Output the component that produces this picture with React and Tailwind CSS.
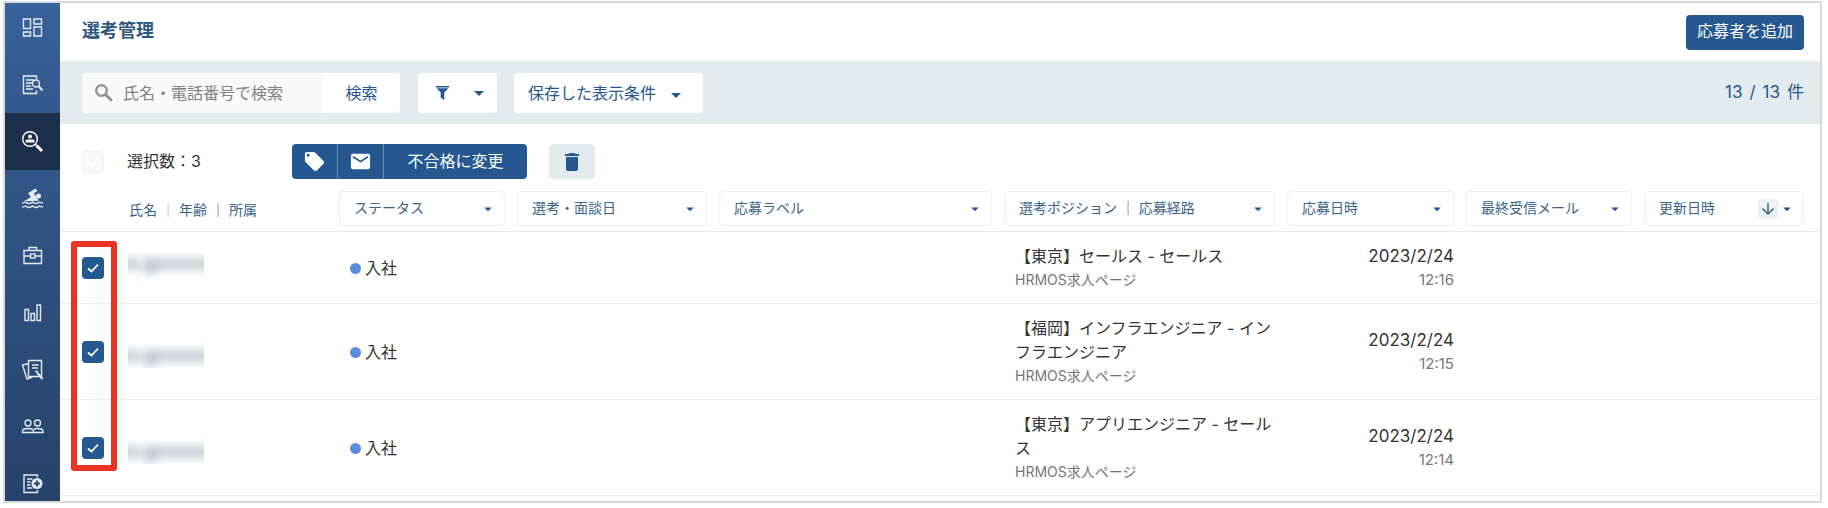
import { MdArrowDownward, MdArrowDropDown, MdDelete, MdEmail, MdLocalOffer } from 'react-icons/md';

const navItems = [
  {
    label: 'ダッシュボード',
    icon: (
      <path d="M1.500 2h7v9.500h-7zM12 2h7.500v5H12zM1.500 15h7v4h-7zM12 10h7.500v9H12z" />
    ),
  },
  {
    label: '求人',
    icon: (
      <>
        <path d="M14.500 5V2H1.500v17.500h13v-3M4 6h8M4 9h6M4 12h5M4 15h7" />
        <circle cx="14" cy="9.500" r="3.500" />
        <path d="M16.500 12l4 4.500" strokeWidth="2" />
      </>
    ),
  },
  {
    label: '選考管理',
    icon: (
      <>
        <circle cx="8" cy="8" r="7.300" />
        <circle cx="8" cy="5.500" r="2" fill="currentColor" stroke="none" />
        <path d="M3.500 11.500V10q0-1.500 2-1.500h5q2 0 2 1.500v1.500z" fill="currentColor" stroke="none" />
        <path d="M13 13l1.500 1.500" />
        <path d="M14.500 14.500l5.500 5.500" strokeWidth="3" />
      </>
    ),
  },
  {
    label: '入社管理',
    icon: (
      <>
        <path d="M4.500 12.500L10 9 7 5.500l6-4 1.500 1-3.500 3 4.500 6.500z" fill="currentColor" />
        <circle cx="16.500" cy="8" r="2.500" fill="currentColor" stroke="none" />
        <path d="M0 15q2 0 3.500-1 1.700 1.500 3.500 1.500t3.500-1.500q1.700 1.500 3.500 1.500t3.500-1.500q1.500 1 3.500 1M0 19q2 0 3.500-1 1.700 1.500 3.500 1.500t3.500-1.500q1.700 1.500 3.500 1.500t3.500-1.500q1.500 1 3.500 1" />
      </>
    ),
  },
  {
    label: 'タレントプール',
    icon: (
      <>
        <path d="M2 5.500h17.500v13H2zM7 5.500V2.500h7.500v3M2 11h6.500M13 11h6.500" />
        <rect x="8.500" y="9" width="4.500" height="4" />
      </>
    ),
  },
  {
    label: 'レポート',
    icon: <path d="M3 7.500h3.500v11H3zM9 11.500h3.500v7H9zM15 3h3.500v15.500H15z" />,
  },
  {
    label: '書類',
    icon: (
      <>
        <path d="M6.500 1.500h13v16h-13zM6.500 4.500l-6 1.500 4.500 14 5.500-2M10 6h6.500M10 9h6M13 12.500h3" />
        <path d="M15 13.500l5.500 6.500" strokeWidth="2" />
      </>
    ),
  },
  {
    label: 'メンバー',
    icon: (
      <>
        <circle cx="6" cy="7" r="3" />
        <circle cx="15.500" cy="7" r="3" />
        <path d="M.500 16.500v-1.500q0-2.500 5.500-2.500t5.500 2.500v1.500zM12 13q1.500-.500 3.500-.500 5.500 0 5.500 2.500v1.500h-9.500" />
      </>
    ),
  },
  {
    label: '書類追加',
    icon: (
      <>
        <path d="M15.500 4.500V2H2v17.500h13.500V17M5 6h5.500M5 9h3.500M5 12h3.500M5 15h5.500" />
        <circle cx="15" cy="10.500" r="5.500" fill="currentColor" stroke="none" />
        <path d="M15 7.500v6M12 10.500h6" stroke="#29466e" strokeWidth="2" />
      </>
    ),
  },
];

const applicants = [
  { id: 1, status: '入社', position: '【東京】セールス - セールス', route: 'HRMOS求人ページ', date: '2023/2/24', time: '12:16' },
  { id: 2, status: '入社', position: '【福岡】インフラエンジニア - インフラエンジニア', route: 'HRMOS求人ページ', date: '2023/2/24', time: '12:15' },
  { id: 3, status: '入社', position: '【東京】アプリエンジニア - セールス', route: 'HRMOS求人ページ', date: '2023/2/24', time: '12:14' },
];

function Checkbox({ label, disabled = false }) {
  return (
    <span className="grid w-[22px] h-[22px] place-items-center">
      <input
        type="checkbox"
        defaultChecked
        disabled={disabled}
        aria-label={label}
        className="col-start-1 row-start-1 w-[22px] h-[22px] appearance-none rounded bg-[#255890] disabled:bg-[#f8f8f8] disabled:border disabled:border-[#f0f0f0]"
      />
      <svg viewBox="0 0 22 22" className="col-start-1 row-start-1 w-[22px] h-[22px] pointer-events-none" fill="none" stroke="#fff" strokeWidth="1.800">
        <path d="M6 11.500l3.500 3L16 7.500" />
      </svg>
    </span>
  );
}

function HeaderFilter({ children, sorted = false }) {
  return (
    <button type="button" className="flex w-full h-[35px] items-center rounded border border-[#eaf0f2] pl-3.5 pr-[7px] text-left">
      <span className="flex-1 whitespace-nowrap pb-0.5">{children}</span>
      {sorted && (
        <span className="grid w-5 h-5 place-items-center rounded bg-[#eef1f4]">
          <MdArrowDownward className="w-[18px] h-[18px]" />
        </span>
      )}
      <MdArrowDropDown className="w-[18px] h-[18px] text-[#255890]" />
    </button>
  );
}

function Sidebar() {
  return (
    <nav className="w-[55px] shrink-0 overflow-hidden bg-linear-to-b from-[#376199] to-[#27426a] text-[#e4ebf4]">
      <ul className="-mt-1">
        {navItems.map((item, index) => (
          <li key={item.label}>
            <a
              href="#"
              aria-label={item.label}
              className={`flex h-[57px] items-center justify-center ${index === 2 ? 'bg-[#1d304b] text-white' : ''}`}
            >
              <svg viewBox="0 0 21 21" className="w-[21px] h-[21px] overflow-visible" fill="none" stroke="currentColor" strokeWidth="1.400">
                {item.icon}
              </svg>
            </a>
          </li>
        ))}
      </ul>
    </nav>
  );
}

function FilterBar() {
  return (
    <div className="flex h-[63px] items-center bg-[#e4ebee] pl-[22px] pr-4 text-base text-[#255890]">
      <form className="flex h-10 overflow-hidden rounded bg-white" onSubmit={(event) => event.preventDefault()}>
        <label className="flex w-[241px] items-center gap-2.5 bg-[#f9f9f9] pl-[13px]">
          <svg viewBox="0 0 18 18" className="w-[18px] h-[18px] shrink-0" fill="none" stroke="#939393">
            <circle cx="6.500" cy="6.500" r="5.300" strokeWidth="2.400" />
            <path d="M10.300 10.300l6.500 6.500" strokeWidth="2.800" />
          </svg>
          <input
            type="text"
            aria-label="検索キーワード"
            placeholder="氏名・電話番号で検索"
            className="min-w-0 flex-1 bg-transparent outline-none placeholder:text-[#818181]"
          />
        </label>
        <button type="submit" className="w-[77px]">検索</button>
      </form>
      <button type="button" aria-label="絞り込み" className="ml-[18px] flex h-10 w-[79px] items-center justify-between rounded bg-white pl-[18px] pr-1.5">
        <svg viewBox="0 0 13 14" className="w-[13px] h-3.5" fill="currentColor">
          <path d="M0 0h13v1.500H0zM.500 2.300h12L8.300 6.500V14L4.700 11.500V6.500z" />
        </svg>
        <MdArrowDropDown className="w-6 h-6" />
      </button>
      <button type="button" className="ml-[17px] flex h-10 items-center gap-2 rounded bg-white pl-3.5 pr-[15px]">
        保存した表示条件
        <MdArrowDropDown className="mt-1 w-6 h-6" />
      </button>
      <p className="ml-auto flex gap-[7px] text-[17px]">
        <span>13</span>
        <span>/</span>
        <span>13</span>
        <span>件</span>
      </p>
    </div>
  );
}

function ApplicantTable() {
  return (
    <div className="relative">
      <table className="w-full table-fixed border-collapse">
        <colgroup>
          <col className="w-[55px]" />
          <col className="w-[218px]" />
          <col className="w-[178px]" />
          <col className="w-[202px]" />
          <col />
          <col className="w-[283px]" />
          <col className="w-[179px]" />
          <col className="w-[178px]" />
          <col className="w-[182px]" />
        </colgroup>
        <thead className="text-sm text-[#3a6389]">
          <tr className="border-b border-[#e8e9ea] [&>th]:px-1.5 [&>th]:pt-0 [&>th]:pb-[5px] [&>th]:font-normal">
            <td />
            <th className="text-left">
              <span className="flex items-center gap-1 pl-2 pt-0.5">
                氏名 <span className="text-[#9fb3c6]">｜</span> 年齢 <span>｜</span> 所属
              </span>
            </th>
            <th><HeaderFilter>ステータス</HeaderFilter></th>
            <th><HeaderFilter>選考・面談日</HeaderFilter></th>
            <th><HeaderFilter>応募ラベル</HeaderFilter></th>
            <th><HeaderFilter>選考ポジション ｜ 応募経路</HeaderFilter></th>
            <th><HeaderFilter>応募日時</HeaderFilter></th>
            <th><HeaderFilter>最終受信メール</HeaderFilter></th>
            <th className="pr-4!"><HeaderFilter sorted>更新日時</HeaderFilter></th>
          </tr>
        </thead>
        <tbody className="text-base leading-6 text-[#333]">
          {applicants.map((applicant) => (
            <tr key={applicant.id} className="group border-b border-[#ececec]">
              <td className="pl-[22px]"><Checkbox label={`${applicant.position}を選択`} /></td>
              <td className="pl-[13px]">
                {/* personal details stay masked */}
                <div className="w-[76px] overflow-hidden pt-2 group-first:pt-0 group-first:pb-2" aria-hidden="true">
                  <div className="-mx-2 flex h-6 items-center blur-[5px]">
                    <span className="h-3 w-5 bg-[#c9cfd7]" />
                    <span className="ml-1 mt-1 h-4 w-3 bg-[#bcc4ce]" />
                    <span className="h-3 flex-1 bg-[#c9cfd7]" />
                  </div>
                </div>
              </td>
              <td className="pl-[17px]">
                <span className="flex items-center gap-1">
                  <span className="mt-0.5 w-[11px] h-[11px] rounded-full bg-[#5b8edc]" />
                  {applicant.status}
                </span>
              </td>
              <td />
              <td />
              <td className="py-3 pl-[17px] pr-1.5">
                <p>{applicant.position}</p>
                <p className="text-sm leading-[23px] text-[#777]">{applicant.route}</p>
              </td>
              <td className="pr-1.5 text-right">
                <p className="text-[17px]">{applicant.date}</p>
                <p className="text-[15px] leading-[23px] text-[#777]">{applicant.time}</p>
              </td>
              <td />
              <td />
            </tr>
          ))}
        </tbody>
      </table>
      <div className="pointer-events-none absolute left-[11px] top-[50px] h-[230px] w-[46px] rounded-[3px] border-[6px] border-[#ea3323]" />
    </div>
  );
}

export default function App() {
  return (
    <div className="h-screen bg-white pt-px pr-1.5 pb-[5px] pl-[3px] font-['Inter','Noto_Sans_CJK_JP',sans-serif]">
      <div className="flex h-full overflow-hidden border-2 border-[#d9dada]">
        <Sidebar />
        <main className="min-w-0 flex-1">
          <header className="flex h-[58px] items-center justify-between pl-[22px] pr-4">
            <h1 className="pb-0.5 text-lg font-bold text-[#2d5880]">選考管理</h1>
            <button type="button" className="h-[35px] rounded bg-[#255890] px-[11px] pb-0.5 text-base text-white">応募者を追加</button>
          </header>
          <FilterBar />
          <div className="flex items-center pl-[22px] pt-5 pb-3 text-base text-[#333]">
            <Checkbox label="すべて選択" disabled />
            <p className="ml-[23px] w-[165px] pb-0.5">選択数：3</p>
            <div className="flex h-[35px] divide-x divide-[#6f92b8] overflow-hidden rounded bg-[#255890] text-white">
              <button type="button" aria-label="ラベル" className="grid w-[46px] place-items-center"><MdLocalOffer className="w-[23px] h-[23px]" /></button>
              <button type="button" aria-label="メール" className="grid w-[46px] place-items-center"><MdEmail className="w-[23px] h-[23px]" /></button>
              <button type="button" className="w-[143px] pb-0.5">不合格に変更</button>
            </div>
            <button type="button" aria-label="削除" className="ml-[22px] grid h-[35px] w-[46px] place-items-center rounded bg-[#e4ebee] text-[#255890]">
              <MdDelete className="w-6 h-6" />
            </button>
          </div>
          <ApplicantTable />
        </main>
      </div>
    </div>
  );
}
